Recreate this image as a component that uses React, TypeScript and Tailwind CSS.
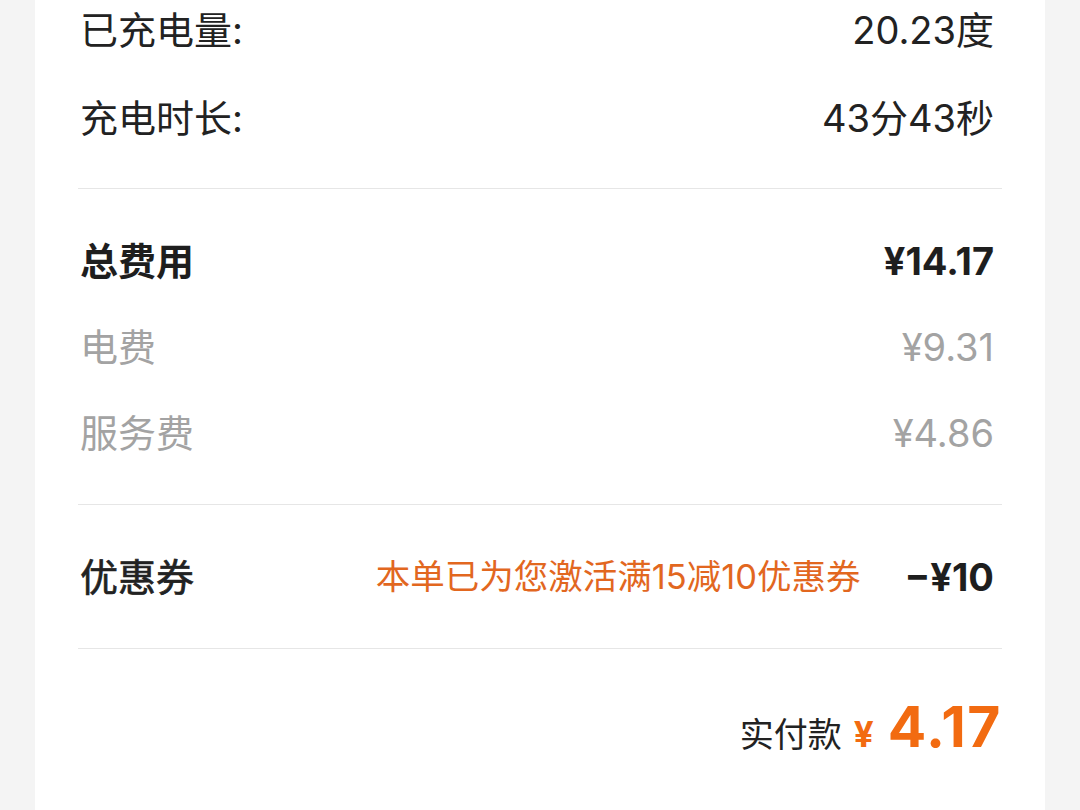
import React from "react";

const font = { fontFamily: 'Inter, "Noto Sans CJK SC", "Noto Sans", sans-serif' };

function Row({ label, value, cls = "", h = "h-[88px]" }: { label: string; value: string; cls?: string; h?: string }) {
  return (
    <div className={`flex items-center justify-between pl-[2px] pr-[8px] ${h} ${cls}`}>
      <span>{label}</span>
      <span>{value}</span>
    </div>
  );
}

export default function App() {
  return (
    <div className="w-[1080px] h-[810px] overflow-hidden bg-[#f4f4f4]" style={font}>
      <div className="mx-[35px] flex h-full flex-col bg-white px-[43px]">
        <div className="-mt-[14px] pb-[26px] text-[38px] text-[#222222]">
          <Row label="已充电量:" value="20.23度" />
          <Row label="充电时长:" value="43分43秒" />
        </div>
        <div className="h-px shrink-0 bg-[#e6e6e6]" />
        <div className="pt-[29px] pb-[28px] text-[38px]">
          <Row label="总费用" value="¥14.17" h="h-[86px]" cls="font-bold text-[#1e1e1e]" />
          <Row label="电费" value="¥9.31" h="h-[86px]" cls="text-[#a3a3a3]" />
          <Row label="服务费" value="¥4.86" h="h-[86px]" cls="text-[#a3a3a3]" />
        </div>
        <div className="h-px shrink-0 bg-[#e6e6e6]" />
        <div className="pt-[29px] pb-[28px]">
          <div className="flex h-[86px] items-center justify-between pl-[2px] pr-[8px]">
            <span className="text-[38px] text-[#222222] [-webkit-text-stroke:0.7px_#222222]">优惠券</span>
            <div className="flex items-center gap-[44px]">
              <span className="text-[34.5px] text-[#e2671f]">本单已为您激活满15减10优惠券</span>
              <span className="text-[38px] font-bold text-[#1e1e1e]">−¥10</span>
            </div>
          </div>
        </div>
        <div className="h-px shrink-0 bg-[#e6e6e6]" />
        <div className="flex items-baseline justify-end pt-[49px]">
          <span className="text-[34px] text-[#222222]">实付款</span>
          <span className="ml-[12px] text-[35px] font-bold text-[#f26b11]">¥</span>
          <span className="ml-[14px] text-[57px] font-bold leading-none tracking-[1.5px] text-[#f26b11]">4.17</span>
        </div>
      </div>
    </div>
  );
}
